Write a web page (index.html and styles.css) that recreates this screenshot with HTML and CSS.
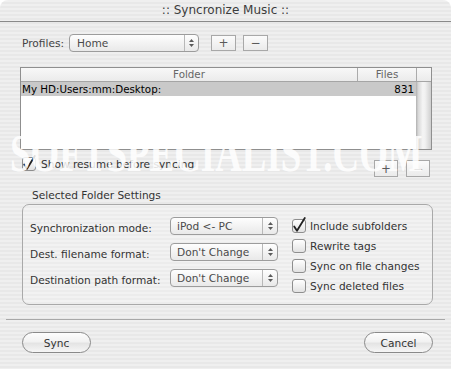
FILE: index.html
```
<!DOCTYPE html>
<html>
<head>
<meta charset="utf-8">
<title>Syncronize Music</title>
<link rel="stylesheet" href="styles.css">
</head>
<body>
<div class="window">
  <div class="titlebar">:: Syncronize Music ::</div>
  <div class="content">
    <div class="profiles">
      <span class="profiles-label">Profiles:</span>
      <div class="popup popup-profile">
        <span class="popup-text">Home</span>
        <span class="popup-arrows"><svg width="5" height="8" viewBox="0 0 5 8"><polygon points="2.5,0 5,3 0,3" fill="#5a5a5a"/><polygon points="0,5 5,5 2.5,8" fill="#5a5a5a"/></svg></span>
      </div>
      <button class="sqbtn sqbtn-lg sqbtn-first">+</button>
      <button class="sqbtn sqbtn-lg sqbtn-second">&minus;</button>
    </div>

    <div class="table">
      <div class="thead">
        <div class="th">Folder</div>
        <div class="th th-sep">Files</div>
        <div class="th th-sep"></div>
      </div>
      <div class="tbody">
        <div class="rows">
          <div class="row selected"><span>My HD:Users:mm:Desktop:</span><span>831</span></div>
        </div>
        <div class="scrolltrack"></div>
      </div>
    </div>

    <div class="under">
      <div class="check check-resume">
        <span class="cbox"><svg width="14" height="14" viewBox="0 0 14 14"><path d="M2.2 7.4 L5 11.8 L12.8 -1" fill="none" stroke="#222" stroke-width="1.8" stroke-linecap="round" stroke-linejoin="round"/></svg></span>
        <span>Show resume before syncing</span>
      </div>
      <div class="smallbtns">
        <button class="sqbtn sqbtn-sm">+</button>
        <button class="sqbtn sqbtn-sm">&minus;</button>
      </div>
    </div>

    <div class="group-caption">Selected Folder Settings</div>
    <div class="group">
      <div class="group-left">
        <div class="grow">
          <span class="glabel">Synchronization mode:</span>
          <div class="popup popup-mode">
            <span class="popup-text">iPod &lt;- PC</span>
            <span class="popup-arrows"><svg width="5" height="8" viewBox="0 0 5 8"><polygon points="2.5,0 5,3 0,3" fill="#5a5a5a"/><polygon points="0,5 5,5 2.5,8" fill="#5a5a5a"/></svg></span>
          </div>
        </div>
        <div class="grow">
          <span class="glabel">Dest. filename format:</span>
          <div class="popup popup-mode">
            <span class="popup-text">Don't Change</span>
            <span class="popup-arrows"><svg width="5" height="8" viewBox="0 0 5 8"><polygon points="2.5,0 5,3 0,3" fill="#5a5a5a"/><polygon points="0,5 5,5 2.5,8" fill="#5a5a5a"/></svg></span>
          </div>
        </div>
        <div class="grow">
          <span class="glabel">Destination path format:</span>
          <div class="popup popup-mode">
            <span class="popup-text">Don't Change</span>
            <span class="popup-arrows"><svg width="5" height="8" viewBox="0 0 5 8"><polygon points="2.5,0 5,3 0,3" fill="#5a5a5a"/><polygon points="0,5 5,5 2.5,8" fill="#5a5a5a"/></svg></span>
          </div>
        </div>
      </div>
      <div class="group-right">
        <div class="check gcheck">
          <span class="cbox"><svg width="14" height="14" viewBox="0 0 14 14"><path d="M2.2 7.4 L5 11.8 L12.8 -1" fill="none" stroke="#222" stroke-width="1.8" stroke-linecap="round" stroke-linejoin="round"/></svg></span>
          <span>Include subfolders</span>
        </div>
        <div class="check gcheck"><span class="cbox"></span><span>Rewrite tags</span></div>
        <div class="check gcheck"><span class="cbox"></span><span>Sync on file changes</span></div>
        <div class="check gcheck"><span class="cbox"></span><span>Sync deleted files</span></div>
      </div>
    </div>
  </div>

  <div class="separator"></div>
  <div class="footer">
    <button class="pill">Sync</button>
    <button class="pill">Cancel</button>
  </div>

  <div class="watermark" aria-hidden="true">SOFTSPECIALIST.COM</div>
</div>
</body>
</html>
```

FILE: styles.css
```
html, body {
  margin: 0;
  background: #ffffff;
}

body {
  font-family: "DejaVu Sans", "Liberation Sans", sans-serif;
  font-size: 10.6px;
  color: #333333;
}

.window {
  position: relative;
  width: 451px;
  height: 369px;
  border-radius: 8px 8px 0 0;
  overflow: hidden;
  display: flex;
  flex-direction: column;
  background: repeating-linear-gradient(to bottom, #efefef 0, #efefef 2px, #e8e8e8 2px, #e8e8e8 4px);
}

.titlebar {
  flex: none;
  height: 21px;
  line-height: 21px;
  border-bottom: 1px solid #8a8a8a;
  text-align: center;
  font-size: 12px;
  color: #3c3c3c;
}

.content {
  display: flex;
  flex-direction: column;
  padding: 0 19px 0 20px;
}

/* Profiles row */
.profiles {
  margin-top: 12px;
  height: 18px;
  padding-left: 2px;
  display: flex;
  align-items: center;
}

.profiles-label {
  width: 47px;
  color: #444444;
}

.popup {
  box-sizing: border-box;
  height: 18px;
  border: 1px solid #9c9c9c;
  border-radius: 4px;
  background: linear-gradient(#fefefe, #f2f2f2 55%, #e9e9e9);
  display: flex;
  align-items: center;
  color: #4a4a4a;
}

.popup-profile {
  width: 130px;
}

.popup-text {
  flex: 1;
  padding-left: 7px;
  white-space: nowrap;
}

.popup-arrows {
  width: 13px;
  align-self: stretch;
  border-left: 1px solid #b8b8b8;
  display: flex;
  align-items: center;
  justify-content: center;
}

.sqbtn {
  box-sizing: border-box;
  border: 1px solid #a8a8a8;
  background: linear-gradient(#fbfbfb, #ebebeb);
  color: #5a5a5a;
  font-family: "DejaVu Sans", sans-serif;
  font-size: 12px;
  line-height: 1;
  padding: 0;
  display: flex;
  align-items: center;
  justify-content: center;
}

.sqbtn-lg {
  width: 25px;
  height: 16px;
}

.sqbtn-first {
  margin-left: 12px;
}

.sqbtn-second {
  margin-left: 7px;
}

.sqbtn-sm {
  width: 24px;
  height: 17px;
}

/* Table */
.table {
  margin-top: 15px;
  height: 83px;
  box-sizing: border-box;
  border: 1px solid #8f8f8f;
  background: #ffffff;
  display: flex;
  flex-direction: column;
}

.thead {
  flex: none;
  height: 14px;
  box-sizing: border-box;
  border-bottom: 1px solid #a5a5a5;
  display: grid;
  grid-template-columns: 336px 59px 15px;
  background: linear-gradient(#f8f8f8, #ebebeb);
}

.th {
  font-size: 10.3px;
  line-height: 13px;
  color: #666666;
  text-align: center;
}

.th-sep {
  border-left: 1px solid #ababab;
}

.tbody {
  flex: 1;
  display: flex;
}

.rows {
  flex: 1;
}

.row {
  height: 14px;
  line-height: 14px;
  padding: 0 2px 0 1px;
  display: flex;
  justify-content: space-between;
  font-size: 10.3px;
  color: #000000;
}

.row.selected {
  background: #c9c9c9;
}

.scrolltrack {
  width: 15px;
  background: linear-gradient(to right, #b0b0b0, #d8d8d8 15%, #f4f4f4 45%, #f1f1f1 60%, #cfcfcf 100%);
}

/* Under table */
.under {
  height: 27px;
  display: flex;
  justify-content: space-between;
}

.check {
  display: flex;
  align-items: center;
  color: #333333;
  white-space: nowrap;
}

.check-resume {
  margin-top: 7px;
  padding-left: 2px;
  height: 14px;
  gap: 5px;
  align-self: flex-start;
}

.cbox {
  flex: none;
  box-sizing: border-box;
  width: 14px;
  height: 14px;
  border: 1px solid #8e8e8e;
  border-radius: 3px;
  background: linear-gradient(#ffffff, #e2e2e2);
  display: flex;
}

.cbox svg {
  margin: -1px;
  overflow: visible;
}

.smallbtns {
  align-self: flex-end;
  display: flex;
  gap: 8px;
  margin-right: 2px;
}

/* Group */
.group-caption {
  margin-top: 12px;
  padding-left: 12px;
  height: 13px;
  line-height: 13px;
  color: #333333;
}

.group {
  margin: 2px -1px 0 2px;
  height: 101px;
  box-sizing: border-box;
  border: 1px solid #a9a9a9;
  border-radius: 7px;
  background: rgba(255, 255, 255, 0.2);
  padding: 12px 0 0 7px;
  display: flex;
}

.group-left {
  width: 248px;
  display: flex;
  flex-direction: column;
  gap: 8px;
}

.grow {
  height: 18px;
  display: flex;
}

.glabel {
  width: 140px;
  padding-top: 5px;
  line-height: 13px;
  color: #333333;
  white-space: nowrap;
}

.popup-mode {
  width: 108px;
}

.popup-mode .popup-text {
  padding-left: 6px;
}

.popup-mode .popup-arrows {
  width: 14px;
}

.group-right {
  margin-left: 14px;
  padding-top: 2px;
  display: flex;
  flex-direction: column;
}

.gcheck {
  height: 20px;
  align-items: flex-start;
  gap: 4px;
  line-height: 14px;
}

/* Footer */
.separator {
  flex: none;
  height: 1px;
  background: #a8a8a8;
  margin: 14px 6px 0 6px;
}

.footer {
  margin-top: 12px;
  padding: 0 18px 0 22px;
  display: flex;
  justify-content: space-between;
}

.pill {
  box-sizing: border-box;
  width: 69px;
  height: 21px;
  border: 1px solid #8a8a8a;
  border-radius: 11px;
  background: linear-gradient(#fdfdfd, #f2f2f2 45%, #e4e4e4 55%, #f6f6f6);
  font-family: "DejaVu Sans", sans-serif;
  font-size: 10.6px;
  color: #333333;
  padding: 0;
}

/* Watermark overlay */
.watermark {
  position: absolute;
  left: 10px;
  top: 128px;
  font-family: "Liberation Serif", serif;
  font-weight: bold;
  font-size: 52px;
  line-height: 52px;
  color: rgba(255, 255, 255, 0.85);
  white-space: nowrap;
  pointer-events: none;
  transform: scaleX(0.71);
  transform-origin: left top;
}
```
